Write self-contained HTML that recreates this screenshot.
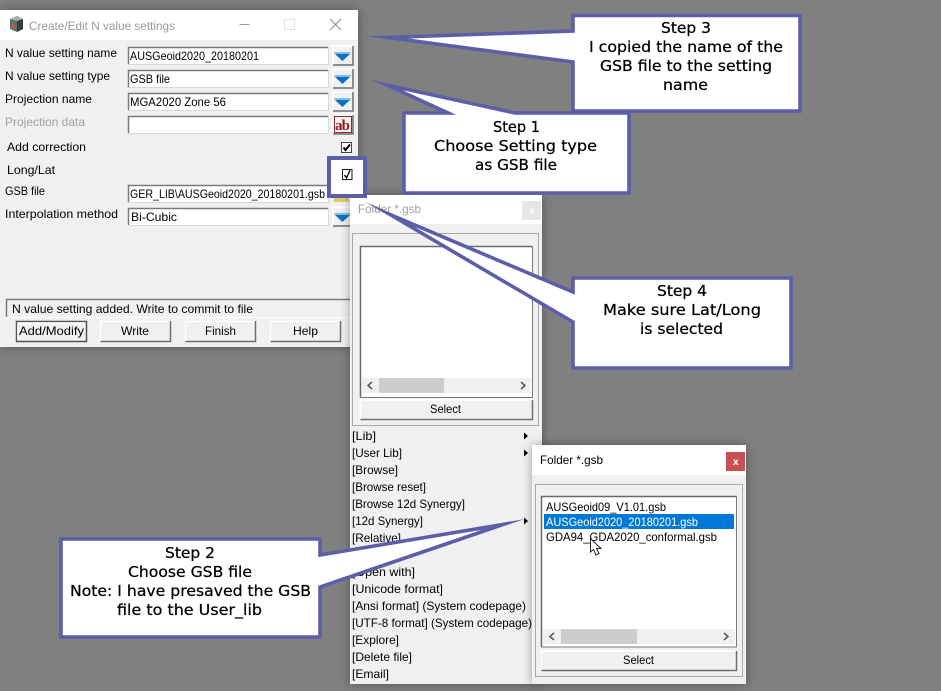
<!DOCTYPE html>
<html><head><meta charset="utf-8"><title>Create/Edit N value settings</title>
<style>
html,body{margin:0;padding:0;background:#808080;width:941px;height:691px;overflow:hidden}
svg{display:block}
text{font-family:"Liberation Sans",sans-serif;font-size:12px;fill:#000}
.c text{font-family:"DejaVu Sans",sans-serif;font-size:15.5px;fill:#000;stroke:#000;stroke-width:.25}
.call{fill:#fff;stroke:#5a5fa8;stroke-width:3.6;stroke-miterlimit:40}
.f{fill:#fff}
.fb{fill:none;stroke:#7a7a7a;stroke-width:1.5}
.fl{fill:none;stroke:#d8d8d8;stroke-width:1}
.b{fill:#f0f0f0}
.bd{fill:none;stroke:#6e6e6e;stroke-width:1.5}
.bl{fill:none;stroke:#fff;stroke-width:1.5}
.tri{fill:#0e70c2}
.tl{fill:#7fc0ea}
</style></head><body>
<svg width="941" height="691" viewBox="0 0 941 691" xmlns="http://www.w3.org/2000/svg">
<defs><filter id="s" x="-10%" y="-10%" width="120%" height="120%"><feDropShadow dx="0" dy="0" stdDeviation="5" flood-color="#000" flood-opacity=".35"/></filter></defs>
<rect width="941" height="691" fill="#808080"/>

<!-- Main window -->
<rect x="0" y="10" width="358" height="337" fill="#f0f0f0" filter="url(#s)"/>
<rect x="0" y="10" width="358" height="30" fill="#fff"/>
<path d="M10,19 L17,16 L23,19 L23,29 L17,32 L10,29Z" fill="#5d7268"/>
<path d="M17,21 L23,19 L23,29 L17,32Z" fill="#2f4238"/>
<path d="M10,19 L17,16 L23,19 L17,21Z" fill="#a3b3aa"/>
<rect x="12" y="24" width="3" height="4" fill="#c05a50"/>
<text x="29" y="30" style="fill:#999" textLength="146" lengthAdjust="spacingAndGlyphs">Create/Edit N value settings</text>
<path d="M239.500,24.500H249.500" stroke="#999" fill="none"/>
<rect x="284.500" y="19.500" width="10" height="10" fill="none" stroke="#e2e2e2"/>
<path d="M330,19L341,30M341,19L330,30" stroke="#888" fill="none"/>

<text x="5" y="57" textLength="112" lengthAdjust="spacingAndGlyphs">N value setting name</text>
<text x="5" y="80" textLength="105" lengthAdjust="spacingAndGlyphs">N value setting type</text>
<text x="5" y="103" textLength="87" lengthAdjust="spacingAndGlyphs">Projection name</text>
<text x="5" y="126" textLength="80" lengthAdjust="spacingAndGlyphs" style="fill:#a0a0a0">Projection data</text>
<text x="7" y="151" textLength="79" lengthAdjust="spacingAndGlyphs">Add correction</text>
<text x="7" y="174" textLength="48" lengthAdjust="spacingAndGlyphs">Long/Lat</text>
<text x="5" y="195" textLength="40" lengthAdjust="spacingAndGlyphs">GSB file</text>
<text x="5" y="218" textLength="113" lengthAdjust="spacingAndGlyphs">Interpolation method</text>

<!-- Fields -->
<g>
<rect class="f" x="128" y="47" width="200" height="17"/><path class="fb" d="M128.500,64V47.500H328"/><path class="fl" d="M128,64.500H328.500V47"/>
<rect class="f" x="128" y="70" width="200" height="17"/><path class="fb" d="M128.500,87V70.500H328"/><path class="fl" d="M128,87.500H328.500V70"/>
<rect class="f" x="128" y="93" width="200" height="17"/><path class="fb" d="M128.500,110V93.500H328"/><path class="fl" d="M128,110.500H328.500V93"/>
<rect class="f" x="128" y="116" width="200" height="17"/><path class="fb" d="M128.500,133V116.500H328"/><path class="fl" d="M128,133.500H328.500V116"/>
<rect class="f" x="128" y="185" width="200" height="17"/><path class="fb" d="M128.500,202V185.500H328"/><path class="fl" d="M128,202.500H328.500V185"/>
<rect class="f" x="128" y="208" width="200" height="17"/><path class="fb" d="M128.500,225V208.500H328"/><path class="fl" d="M128,225.500H328.500V208"/>
</g>
<text x="130" y="60" textLength="129" lengthAdjust="spacingAndGlyphs">AUSGeoid2020_20180201</text>
<text x="130" y="83" textLength="40" lengthAdjust="spacingAndGlyphs">GSB file</text>
<text x="130" y="106" textLength="96" lengthAdjust="spacingAndGlyphs">MGA2020 Zone 56</text>
<text x="130" y="198" textLength="195" lengthAdjust="spacingAndGlyphs">GER_LIB\AUSGeoid2020_20180201.gsb</text>
<text x="131" y="221" textLength="46" lengthAdjust="spacingAndGlyphs">Bi-Cubic</text>

<!-- Dropdown buttons -->
<g>
<path class="bl" d="M333,65V46H353"/><path class="bd" d="M333,65H353V46"/><path class="tl" d="M334,52H351L350,54H335Z"/><path class="tri" d="M335,54H350L342.500,61Z"/>
<path class="bl" d="M333,88V69H353"/><path class="bd" d="M333,88H353V69"/><path class="tl" d="M334,75H351L350,77H335Z"/><path class="tri" d="M335,77H350L342.500,84Z"/>
<path class="bl" d="M333,111V92H353"/><path class="bd" d="M333,111H353V92"/><path class="tl" d="M334,98H351L350,100H335Z"/><path class="tri" d="M335,100H350L342.500,107Z"/>
<path class="bl" d="M333,226V207H353"/><path class="bd" d="M333,226H353V207"/><path class="tl" d="M334,213H351L350,215H335Z"/><path class="tri" d="M335,215H350L342.500,222Z"/>
</g>
<!-- ab button -->
<path class="bl" d="M333,134V115H353"/><path class="bd" d="M333,134H353V115"/>
<rect x="334.500" y="116.500" width="17" height="16" fill="#fbeeee" stroke="#8a2a2a"/>
<text x="335" y="130" style="font-family:'Liberation Serif',serif;font-weight:bold;font-size:15px;fill:#8b1c1c" textLength="15">ab</text>

<!-- Add correction checkbox -->
<rect x="341.500" y="142.500" width="10" height="10" fill="#fff" stroke="#444"/>
<path d="M343.500,147.500L345.500,150L350,144.500" fill="none" stroke="#000" stroke-width="2"/>

<!-- Folder icon stub -->
<rect x="334" y="198" width="15" height="4" fill="#e7c66a"/>

<!-- Status + buttons -->
<rect x="6" y="299" width="346" height="18" fill="#f0f0f0"/>
<path d="M6.500,317V299.500H352" fill="none" stroke="#7a7a7a" stroke-width="1.500"/>
<path d="M6,317.500H352" fill="none" stroke="#fff"/>
<text x="12" y="313" textLength="241" lengthAdjust="spacingAndGlyphs">N value setting added. Write to commit to file</text>

<g>
<rect x="16.500" y="321.500" width="70" height="20" fill="#f0f0f0" stroke="#555" stroke-width="1.500"/>
<path class="bl" d="M18,340V323H85"/>
<text x="19" y="335" textLength="65" lengthAdjust="spacingAndGlyphs">Add/Modify</text>
<path class="bl" d="M100.500,341V321.500H171"/><path class="bd" d="M100.500,341.500H170.500V321"/>
<text x="121" y="335" textLength="28" lengthAdjust="spacingAndGlyphs">Write</text>
<path class="bl" d="M185.500,341V321.500H256"/><path class="bd" d="M185.500,341.500H255.500V321"/>
<text x="205" y="335" textLength="31" lengthAdjust="spacingAndGlyphs">Finish</text>
<path class="bl" d="M270.500,341V321.500H341"/><path class="bd" d="M270.500,341.500H340.500V321"/>
<text x="293" y="335" textLength="25" lengthAdjust="spacingAndGlyphs">Help</text>
</g>

<!-- Folder window 1 -->
<rect x="350" y="195" width="192" height="489" fill="#f0f0f0" filter="url(#s)"/>
<rect x="350" y="195" width="192" height="29" fill="#fff"/>
<text x="358" y="213" style="fill:#a0a0a0" textLength="63" lengthAdjust="spacingAndGlyphs">Folder *.gsb</text>
<rect x="522" y="201" width="19" height="19" fill="#e6e6e6"/>
<text x="529" y="214" style="fill:#fff;font-size:10px;font-weight:bold">x</text>
<rect x="352.500" y="233.500" width="186" height="192" fill="none" stroke="#a8a8a8"/>
<rect x="360" y="246" width="173" height="151" fill="#fff"/>
<path d="M360.500,397V246.500H532" fill="none" stroke="#6a6a6a" stroke-width="1.500"/>
<path d="M532.500,246V397.500H360" fill="none" stroke="#7a7a7a"/>
<rect x="362" y="378" width="169" height="15" fill="#f0f0f0"/>
<rect x="379" y="378" width="65" height="15" fill="#cdcdcd"/>
<path d="M372,382L368,385.500L372,389M521,382L525,385.500L521,389" fill="none" stroke="#555" stroke-width="1.500"/>
<rect x="360" y="399.500" width="173" height="20" fill="#f0f0f0"/>
<path class="bl" d="M360.500,419V400H533"/><path class="bd" d="M360.500,419.500H532.500V400"/>
<text x="430" y="413" textLength="31" lengthAdjust="spacingAndGlyphs">Select</text>

<!-- Menu -->
<g>
<text x="352" y="440" textLength="24" lengthAdjust="spacingAndGlyphs">[Lib]</text>
<text x="352" y="457" textLength="50" lengthAdjust="spacingAndGlyphs">[User Lib]</text>
<text x="352" y="474" textLength="46" lengthAdjust="spacingAndGlyphs">[Browse]</text>
<text x="352" y="491" textLength="74" lengthAdjust="spacingAndGlyphs">[Browse reset]</text>
<text x="352" y="508" textLength="113" lengthAdjust="spacingAndGlyphs">[Browse 12d Synergy]</text>
<text x="352" y="525" textLength="71" lengthAdjust="spacingAndGlyphs">[12d Synergy]</text>
<text x="352" y="542" textLength="49" lengthAdjust="spacingAndGlyphs">[Relative]</text>
<text x="352" y="576" textLength="63" lengthAdjust="spacingAndGlyphs">[Open with]</text>
<text x="352" y="593" textLength="91" lengthAdjust="spacingAndGlyphs">[Unicode format]</text>
<text x="352" y="610" textLength="174" lengthAdjust="spacingAndGlyphs">[Ansi format] (System codepage)</text>
<text x="352" y="627" textLength="180" lengthAdjust="spacingAndGlyphs">[UTF-8 format] (System codepage)</text>
<text x="352" y="644" textLength="47" lengthAdjust="spacingAndGlyphs">[Explore]</text>
<text x="352" y="661" textLength="60" lengthAdjust="spacingAndGlyphs">[Delete file]</text>
<text x="352" y="678" textLength="37" lengthAdjust="spacingAndGlyphs">[Email]</text>
<path d="M524,432.500L528,436L524,439.500Z" fill="#000"/>
<path d="M524,449.500L528,453L524,456.500Z" fill="#000"/>
<path d="M524,517.500L528,521L524,524.500Z" fill="#000"/>
</g>

<!-- Folder window 2 -->
<rect x="532" y="445" width="214" height="239" fill="#f0f0f0" filter="url(#s)"/>
<rect x="532" y="445" width="214" height="30" fill="#fff"/>
<text x="540" y="464" textLength="63" lengthAdjust="spacingAndGlyphs">Folder *.gsb</text>
<rect x="726" y="452" width="19" height="19" fill="#c75050"/>
<text x="733" y="465" style="fill:#fff;font-size:10px;font-weight:bold">x</text>
<rect x="535.500" y="484.500" width="207" height="192" fill="none" stroke="#a8a8a8"/>
<rect x="541" y="496" width="196" height="151" fill="#fff"/>
<path d="M541.500,647V496.500H737" fill="none" stroke="#6a6a6a" stroke-width="1.500"/>
<path d="M736.500,496V647H541" fill="none" stroke="#7a7a7a"/>
<rect x="544" y="514" width="190" height="15" fill="#0078d7"/>
<text x="546" y="511" textLength="120" lengthAdjust="spacingAndGlyphs">AUSGeoid09_V1.01.gsb</text>
<text x="546" y="526" style="fill:#fff" textLength="152" lengthAdjust="spacingAndGlyphs">AUSGeoid2020_20180201.gsb</text>
<text x="546" y="541" textLength="171" lengthAdjust="spacingAndGlyphs">GDA94_GDA2020_conformal.gsb</text>
<rect x="543" y="629" width="192" height="15" fill="#f0f0f0"/>
<rect x="561" y="629" width="76" height="15" fill="#cdcdcd"/>
<path d="M554,633L550,636.500L554,640M724,633L728,636.500L724,640" fill="none" stroke="#555" stroke-width="1.500"/>
<rect x="541" y="650" width="196" height="21" fill="#f0f0f0"/>
<path class="bl" d="M541.500,670V651H737"/><path class="bd" d="M541.500,670.500H736.500V651"/>
<text x="623" y="664" textLength="31" lengthAdjust="spacingAndGlyphs">Select</text>
<!-- cursor -->
<path d="M590.500,538.500V552L593.500,549.500L596,555L599,553.500L596.500,548.500H601Z" fill="#fff" stroke="#222" stroke-width="1"/>

<!-- Long/Lat highlight -->
<rect x="329" y="158" width="36" height="38" fill="#fff" stroke="#5a5fa8" stroke-width="4"/>
<rect x="342.500" y="169.500" width="9.500" height="10" fill="#fff" stroke="#1a1a1a"/>
<path d="M344.500,175L346.500,178L350,170" fill="none" stroke="#000" stroke-width="1.300"/>

<!-- Callouts -->
<g class="c">
<path class="call" d="M573,15.500H800V111H573V62L388,37.500L573,31Z"/>
<text x="661" y="33" textLength="50" lengthAdjust="spacingAndGlyphs">Step 3</text>
<text x="589" y="52" textLength="194" lengthAdjust="spacingAndGlyphs">I copied the name of the</text>
<text x="600" y="71" textLength="172" lengthAdjust="spacingAndGlyphs">GSB file to the setting</text>
<text x="663" y="90" textLength="45" lengthAdjust="spacingAndGlyphs">name</text>

<path class="call" d="M404,113H448L387,85L515,113H629V193H404Z"/>
<text x="493" y="132" textLength="47" lengthAdjust="spacingAndGlyphs">Step 1</text>
<text x="434" y="151" textLength="163" lengthAdjust="spacingAndGlyphs">Choose Setting type</text>
<text x="475" y="170" textLength="82" lengthAdjust="spacingAndGlyphs">as GSB file</text>

<path class="call" d="M573,278H791V368H573V322L390,214.500L573,292Z"/>
<text x="657" y="296" textLength="50" lengthAdjust="spacingAndGlyphs">Step 4</text>
<text x="603" y="315" textLength="158" lengthAdjust="spacingAndGlyphs">Make sure Lat/Long</text>
<text x="640" y="334" textLength="83" lengthAdjust="spacingAndGlyphs">is selected</text>

<path class="call" d="M61,539H320V555L503,524.500L320,587V637H61Z"/>
<text x="165" y="558" textLength="50" lengthAdjust="spacingAndGlyphs">Step 2</text>
<text x="128" y="577" textLength="124" lengthAdjust="spacingAndGlyphs">Choose GSB file</text>
<text x="70" y="596" textLength="241" lengthAdjust="spacingAndGlyphs">Note: I have presaved the GSB</text>
<text x="117" y="615" textLength="145" lengthAdjust="spacingAndGlyphs">file to the User_lib</text>
</g>
</svg>
</body></html>
